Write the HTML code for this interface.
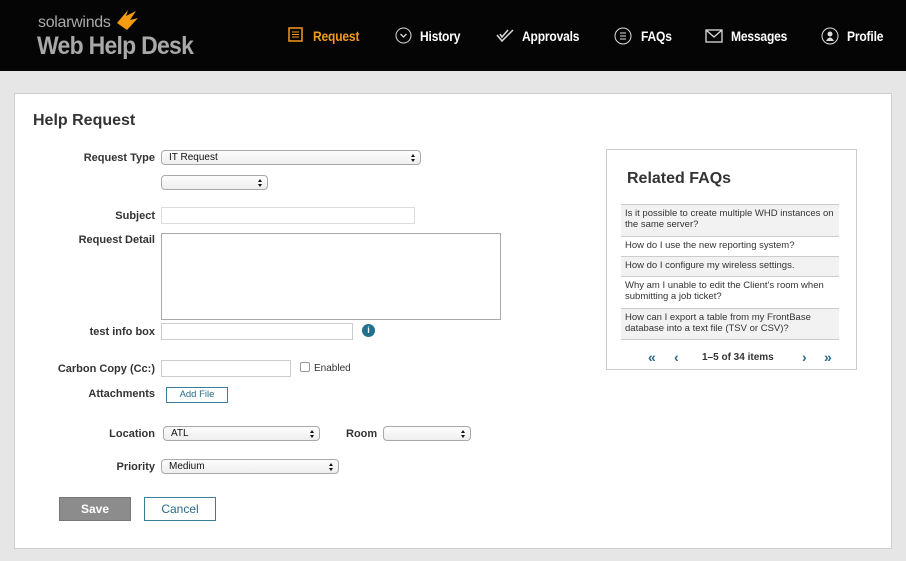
<!DOCTYPE html>
<html><head><meta charset="utf-8"><style>
*{box-sizing:border-box;margin:0;padding:0}
body{width:906px;height:561px;background:#e6e6e6;font-family:"Liberation Sans",sans-serif;position:relative;overflow:hidden;color:#333}
.a{position:absolute}
.hdr{left:0;top:0;width:906px;height:71px;background:#050505}
.ic{top:27px}
.nt{top:28px;font-size:14px;font-weight:bold;color:#fff;transform:scaleX(0.86);transform-origin:0 0;letter-spacing:-0.2px}
.panel{left:14px;top:93px;width:878px;height:456px;background:#fff;border:1px solid #cfcfcf}
.lbl{font-size:11px;font-weight:bold;color:#333;text-align:right;width:140px;left:15px}
.sel{border:1px solid #a9a9a9;border-radius:4px;background:linear-gradient(#fdfdfd,#eee);font-size:10px;color:#111;padding:2px 7px;height:15px;line-height:10px}
.sel:after{content:"";position:absolute;right:5px;top:3px;width:0;height:0;border-left:2.5px solid transparent;border-right:2.5px solid transparent;border-bottom:3px solid #111}
.sel:before{content:"";position:absolute;right:5px;top:8px;width:0;height:0;border-left:2.5px solid transparent;border-right:2.5px solid transparent;border-top:3px solid #111}
.inp{border:1px solid #ccc;background:#fff}
.faq{left:14px;width:218px;font-size:9.5px;color:#333;border-top:1px solid #ccc;padding:3px 4px;line-height:11px}
</style></head><body>
<div class="a hdr"></div>
<div class="a" style="left:38px;top:14px;font-size:16px;color:#aaa;letter-spacing:-0.3px">solarwinds</div>
<svg class="a" style="left:114px;top:9px" width="26" height="22" viewBox="0 0 26 22"><path d="M3 14 L14 1 L12 7 L22 2 L16 11 L24 9 L13 21 Z" fill="#f39c12"/></svg>
<div class="a" style="left:37px;top:32px;font-size:25px;font-weight:bold;color:#a8a8a8;letter-spacing:-0.8px;transform:scaleX(0.92);transform-origin:0 0">Web Help Desk</div>
<svg class="a ic" style="left:288px" width="15" height="15"><rect x="1" y="1" width="13" height="13" fill="none" stroke="#f39a1e" stroke-width="1.5"/><path d="M4 5h7M4 7.5h7M4 10h7" stroke="#f39a1e"/></svg>
<div class="a nt" style="left:313px;color:#f39a1e">Request</div>
<svg class="a ic" style="left:395px" width="17" height="17"><circle cx="8.5" cy="8.5" r="7.5" fill="none" stroke="#ddd"/><path d="M5.5 7l3 3 3-3" fill="none" stroke="#ddd" stroke-width="1.3"/></svg>
<div class="a nt" style="left:420px">History</div>
<svg class="a ic" style="left:496px;top:28px" width="18" height="15"><path d="M1 7l5 6L17 2M4 6l2 3 6-7" fill="none" stroke="#ddd" stroke-width="1.5"/></svg>
<div class="a nt" style="left:522px">Approvals</div>
<svg class="a ic" style="left:614px" width="18" height="18"><circle cx="9" cy="9" r="8" fill="none" stroke="#ddd"/><path d="M6 6h6M6 9h6M6 12h6" stroke="#ddd"/></svg>
<div class="a nt" style="left:641px">FAQs</div>
<svg class="a ic" style="left:705px;top:29px" width="18" height="14"><rect x="1" y="1" width="16" height="12" fill="none" stroke="#ddd" stroke-width="1.3"/><path d="M1 1l8 7 8-7" fill="none" stroke="#ddd" stroke-width="1.3"/></svg>
<div class="a nt" style="left:731px">Messages</div>
<svg class="a ic" style="left:821px" width="18" height="18"><circle cx="9" cy="9" r="8" fill="none" stroke="#ddd"/><circle cx="9" cy="7" r="2.5" fill="#ddd"/><path d="M5 14q4-7 8 0" fill="#ddd"/></svg>
<div class="a nt" style="left:847px">Profile</div>
<div class="a panel"></div>
<div class="a" style="left:33px;top:112px;font-size:16px;font-weight:bold;color:#333">Help Request</div>
<div class="a lbl" style="top:152px">Request Type</div>
<div class="a sel" style="left:161px;top:150px;width:260px">IT Request</div>
<div class="a sel" style="left:161px;top:175px;width:107px"></div>
<div class="a lbl" style="top:210px">Subject</div>
<div class="a inp" style="left:161px;top:207px;width:254px;height:17px;border-color:#ddd"></div>
<div class="a lbl" style="top:234px">Request Detail</div>
<div class="a inp" style="left:161px;top:233px;width:340px;height:87px;border-color:#aaa"></div>
<div class="a lbl" style="top:326px">test info box</div>
<div class="a inp" style="left:161px;top:323px;width:192px;height:17px"></div>
<div class="a" style="left:362px;top:324px;width:13px;height:13px;border-radius:50%;background:#21708d;color:#fff;font-size:9px;font-weight:bold;text-align:center;line-height:13px">i</div>
<div class="a lbl" style="top:363px">Carbon Copy (Cc:)</div>
<div class="a inp" style="left:161px;top:360px;width:130px;height:17px"></div>
<div class="a" style="left:300px;top:362px;width:10px;height:10px;border:1px solid #999;border-radius:2px"></div>
<div class="a" style="left:314px;top:363px;font-size:10px">Enabled</div>
<div class="a lbl" style="top:388px">Attachments</div>
<div class="a" style="left:166px;top:387px;width:62px;height:16px;border:1px solid #3a7f99;font-size:9.5px;color:#2a6a85;text-align:center;line-height:14px">Add File</div>
<div class="a lbl" style="top:428px">Location</div>
<div class="a sel" style="left:163px;top:426px;width:157px">ATL</div>
<div class="a" style="left:346px;top:428px;font-size:11px;font-weight:bold">Room</div>
<div class="a sel" style="left:383px;top:426px;width:88px"></div>
<div class="a lbl" style="top:461px">Priority</div>
<div class="a sel" style="left:161px;top:459px;width:178px">Medium</div>
<div class="a" style="left:59px;top:497px;width:72px;height:24px;background:#8c8c8c;border:1px solid #777;color:#fff;font-size:12px;font-weight:bold;text-align:center;line-height:22px">Save</div>
<div class="a" style="left:144px;top:497px;width:72px;height:24px;border:1px solid #3a7f99;color:#2a6a85;font-size:12px;text-align:center;line-height:22px">Cancel</div>
<div class="a" style="left:606px;top:149px;width:251px;height:221px;border:1px solid #ccc;background:#fff">
<div class="a" style="left:20px;top:20px;font-size:16px;font-weight:bold;color:#333">Related FAQs</div>
<div class="a faq" style="top:54px;background:#f2f2f2;height:32px">Is it possible to create multiple WHD instances on the same server?</div>
<div class="a faq" style="top:86px;height:20px">How do I use the new reporting system?</div>
<div class="a faq" style="top:106px;background:#f2f2f2;height:20px">How do I configure my wireless settings.</div>
<div class="a faq" style="top:126px;height:32px">Why am I unable to edit the Client's room when submitting a job ticket?</div>
<div class="a faq" style="top:158px;background:#f2f2f2;height:32px;border-bottom:1px solid #ccc">How can I export a table from my FrontBase database into a text file (TSV or CSV)?</div>
<div class="a" style="left:41px;top:199px;font-size:14px;font-weight:bold;color:#2a6a85">«</div>
<div class="a" style="left:67px;top:199px;font-size:14px;font-weight:bold;color:#2a6a85">‹</div>
<div class="a" style="left:95px;top:202px;font-size:10px;font-weight:bold;color:#333">1–5 of 34 items</div>
<div class="a" style="left:195px;top:199px;font-size:14px;font-weight:bold;color:#2a6a85">›</div>
<div class="a" style="left:217px;top:199px;font-size:14px;font-weight:bold;color:#2a6a85">»</div>
</div>
</body></html>
